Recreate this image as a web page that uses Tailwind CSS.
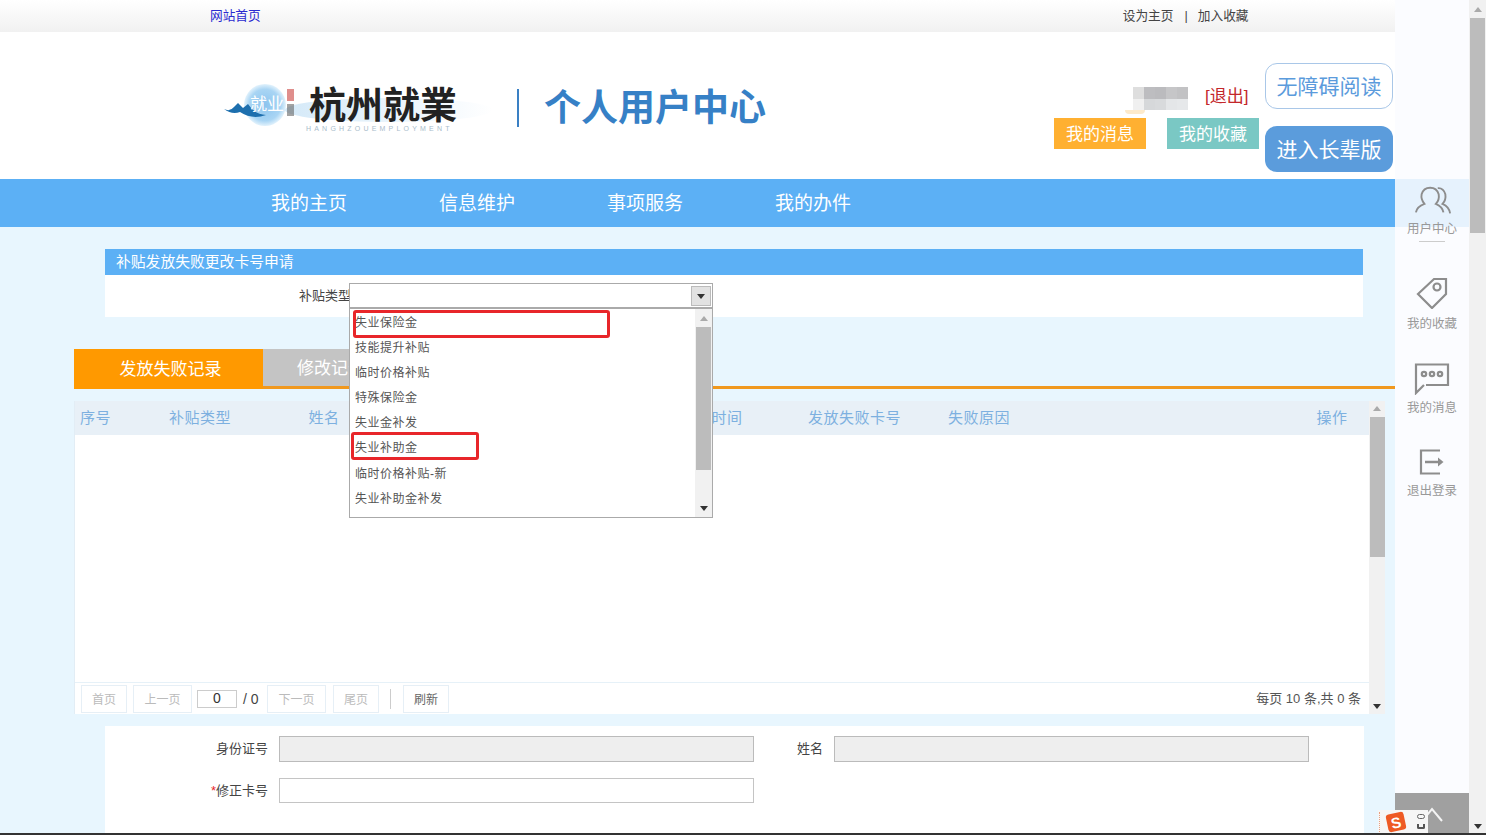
<!DOCTYPE html>
<html lang="zh-CN">
<head>
    <meta charset="UTF-8">
    <title>个人用户中心</title>
    <script src="https://cdn.jsdelivr.net/npm/@tailwindcss/browser@4"></script>
</head>
<body class="overflow-hidden">
<div class="relative flex h-[835px] w-[1486px] overflow-hidden bg-white text-[#444] [font-family:'Liberation_Sans','Noto_Sans_CJK_SC',sans-serif]">

    <!-- main column -->
    <div class="flex h-[835px] w-[1395px] flex-col overflow-hidden">
        <div class="flex h-[32px] shrink-0 items-center bg-gradient-to-b from-white to-[#f1f1f1] pt-[1px] text-[12.7px]">
            <a class="ml-[210px] text-[#2a2ad0]">网站首页</a>
            <a class="ml-[862px]">设为主页</a>
            <span class="ml-[11px]">|</span>
            <a class="ml-[10px]">加入收藏</a>
        </div>

        <div class="flex h-[147px] shrink-0 items-start bg-white">
            <!-- logo -->
            <div class="relative ml-[224px] mt-[48px] h-[60px] w-[270px]">
                <svg class="absolute left-0 top-0" width="270" height="60" viewBox="0 0 270 60">
                    <defs>
                        <radialGradient id="ball"><stop offset="0" stop-color="#8cc4ee"/><stop offset="0.75" stop-color="#a9d5f4"/><stop offset="1" stop-color="#e2f2fc"/></radialGradient>
                        <linearGradient id="wash"><stop offset="0" stop-color="#d4e9f8"/><stop offset="1" stop-color="#ffffff"/></linearGradient>
                    </defs>
                    <circle cx="41" cy="25" r="21" fill="url(#ball)"/>
                    <ellipse cx="165" cy="30" rx="104" ry="12" fill="url(#wash)"/>
                    <path d="M0 29 Q6 32 10 27 L14 23 L19 28 L24 24 Q30 34 42 35 Q28 40 16 32 Q8 35 0 29Z" fill="#1d6fae"/>
                    <rect x="63" y="9" width="7" height="12" fill="#c9423f" opacity="0.6"/>
                    <rect x="63" y="24" width="7" height="12" fill="#666" opacity="0.6"/>
                </svg>
                <span class="absolute left-[26px] top-[13px] text-[17px] leading-[24px] text-white">就业</span>
                <span class="absolute left-[85px] top-[0px] text-[37px] font-bold leading-[54px] text-[#222]">杭州就業</span>
                <span class="absolute left-[82px] top-[75px] mt-[-31px] text-[7px] leading-[10px] tracking-[3.2px] text-[#a9bccb]">HANGHZOUEMPLOYMENT</span>
            </div>
            <div class="ml-[23px] mt-[57px] h-[38px] w-[2px] bg-[#3a80c4]"></div>
            <h1 class="ml-[25px] mt-[51px] text-[37px] font-bold leading-[52px] text-[#3680c6]">个人用户中心</h1>

            <!-- user block -->
            <div class="ml-[288px] mt-[55px] flex w-[206px] flex-col">
                <div class="relative flex h-[31px] items-start">
                    <div class="ml-[79px] grid h-[23px] w-[55px] grid-cols-5 grid-rows-2">
                        <i class="bg-[#dedede]"></i><i class="bg-[#bdbdc0]"></i><i class="bg-[#bbbbbe]"></i><i class="bg-[#c6c6c8]"></i><i class="bg-[#c2c2c4]"></i>
                        <i class="bg-[#f0f0f0]"></i><i class="bg-[#d6d8da]"></i><i class="bg-[#d8dadc]"></i><i class="bg-[#e4e6e8]"></i><i class="bg-[#e6e8ea]"></i>
                    </div>
                    <div class="absolute left-[71px] top-[23px] h-[4px] w-[20px] rounded-b-full bg-[#fdeacb]"></div>
                    <span class="ml-[17px] text-[17px] leading-[20px] text-[#c3272b]">[退出]</span>
                </div>
                <div class="flex gap-[21px] text-[17px] text-white">
                    <a class="flex h-[31px] w-[92px] items-center justify-center bg-[#ffb031] pt-[2px]">我的消息</a>
                    <a class="flex h-[31px] w-[92px] items-center justify-center bg-[#7ac8c4] pt-[2px]">我的收藏</a>
                </div>
            </div>
            <div class="ml-[5px] mt-[31px] flex w-[128px] flex-col gap-[17px] text-[21px]">
                <a class="flex h-[46px] items-center justify-center rounded-[12px] border border-[#a9c7e8] bg-white pt-[1px] text-[#5b9bdc]">无障碍阅读</a>
                <a class="flex h-[46px] items-center justify-center rounded-[12px] bg-[#5b9cdc] pt-[2px] text-white">进入长辈版</a>
            </div>
        </div>

        <nav class="flex h-[48px] shrink-0 items-center bg-[#5cb0f5] pl-[271px] pt-[2px] text-[19px] text-white">
            <a class="w-[168px]">我的主页</a>
            <a class="w-[168px]">信息维护</a>
            <a class="w-[168px]">事项服务</a>
            <a class="w-[168px]">我的办件</a>
        </nav>

        <div class="flex-1 bg-[#e8f6fe] pt-[22px]">
            <div class="ml-[105px] flex h-[26px] w-[1258px] items-center bg-[#5cb0f5] pl-[11px] pt-[1px] text-[14.8px] text-white">补贴发放失败更改卡号申请</div>

            <!-- subsidy type select -->
            <div class="relative z-10 ml-[105px] flex h-[42px] w-[1258px] items-start bg-white pt-[8px]">
                <label class="ml-[194px] text-[13px] leading-[25px]">补贴类型</label>
                <div class="relative -ml-[2px] h-[25px] w-[364px] border border-[#aaa] bg-white">
                    <div class="absolute right-[1px] top-[2px] flex h-[20px] w-[20px] items-center justify-center border border-[#bbb] bg-[#e2e2e2]">
                        <div class="h-0 w-0 border-x-[4px] border-t-[5px] border-x-transparent border-t-[#333]"></div>
                    </div>
                    <!-- open list -->
                    <div class="absolute left-[-1px] top-[24px] flex h-[210px] w-[364px] border border-[#aaa] bg-white">
                        <ul class="flex-1 pl-[5px] pt-[2px] text-[12px] leading-[25.1px] tracking-[0.5px] text-[#555]">
                            <li>失业保险金</li>
                            <li>技能提升补贴</li>
                            <li>临时价格补贴</li>
                            <li>特殊保险金</li>
                            <li>失业金补发</li>
                            <li>失业补助金</li>
                            <li>临时价格补贴-新</li>
                            <li>失业补助金补发</li>
                        </ul>
                        <div class="flex w-[17px] flex-col items-center bg-[#f1f1f1]">
                            <div class="mt-[7px] h-0 w-0 border-x-[4px] border-b-[5px] border-x-transparent border-b-[#aaa]"></div>
                            <div class="mt-[6px] h-[143px] w-[15px] bg-[#bcbcbc]"></div>
                            <div class="mt-auto mb-[6px] h-0 w-0 border-x-[4px] border-t-[5px] border-x-transparent border-t-[#333]"></div>
                        </div>
                        <div class="absolute left-[3px] top-[1px] h-[28px] w-[257px] rounded-[3px] border-[3px] border-[#e8262a]"></div>
                        <div class="absolute left-[1px] top-[123px] h-[28px] w-[128px] rounded-[3px] border-[3px] border-[#e8262a]"></div>
                    </div>
                </div>
            </div>

            <!-- tabs -->
            <div class="ml-[74px] mt-[32px] flex h-[40px] border-b-[3px] border-[#f0981e] text-[17px] text-white">
                <div class="flex h-[40px] w-[189px] items-center justify-center bg-[#ff9900] pl-[4px] pt-[1px]">发放失败记录</div>
                <div class="flex h-[37px] w-[86px] items-center overflow-hidden whitespace-nowrap bg-[#c4c4c4] pl-[34px] pt-[2px]">修改记录</div>
            </div>

            <!-- grid -->
            <div class="ml-[74px] mt-[12px] flex h-[313px] w-[1311px]">
                <div class="flex w-[1295px] flex-col border-l border-[#e2edf5] bg-white">
                    <div class="flex h-[34px] shrink-0 items-center bg-[#e8f0f7] text-[15px] tracking-[0.5px] text-[#7db0e0]">
                        <span class="w-[75px] pl-[5px]">序号</span>
                        <span class="w-[100px] text-center">补贴类型</span>
                        <span class="w-[148px] text-center">姓名</span>
                        <span class="w-[292px]"></span>
                        <span class="w-[74px] text-center">时间</span>
                        <span class="w-[181px] text-center">发放失败卡号</span>
                        <span class="w-[351px] pl-[3px]">失败原因</span>
                        <span class="w-[72px] text-center">操作</span>
                    </div>
                    <div class="flex-1"></div>
                    <div class="flex h-[32px] shrink-0 items-center border-t border-[#e6f1f8] pl-[6px] pr-[8px] text-[12px]">
                        <a class="flex h-[28px] w-[46px] items-center justify-center border border-[#e6eff6] pt-[2px] text-[#bbb]">首页</a>
                        <a class="ml-[6px] flex h-[28px] w-[59px] items-center justify-center border border-[#e6eff6] pt-[2px] text-[#bbb]">上一页</a>
                        <input class="ml-[5px] h-[18px] w-[40px] border border-[#ccc] text-center text-[14px] text-[#333]" value="0">
                        <span class="ml-[6px] w-[24px] pt-[2px] text-[14px] text-[#444]">/ 0</span>
                        <a class="flex h-[28px] w-[59px] items-center justify-center border border-[#e6eff6] pt-[2px] text-[#bbb]">下一页</a>
                        <a class="ml-[7px] flex h-[28px] w-[46px] items-center justify-center border border-[#e6eff6] pt-[2px] text-[#bbb]">尾页</a>
                        <span class="ml-[11px] h-[20px] w-px bg-[#ccc]"></span>
                        <a class="ml-[12px] flex h-[28px] w-[46px] items-center justify-center border border-[#e6eff6] pt-[2px] text-[#666]">刷新</a>
                        <span class="ml-auto text-[13px] text-[#555]">每页 10 条,共 0 条</span>
                    </div>
                </div>
                <div class="flex w-[16px] flex-col items-center bg-[#f1f1f1]">
                    <div class="mt-[5px] h-0 w-0 border-x-[4px] border-b-[5px] border-x-transparent border-b-[#aaa]"></div>
                    <div class="mt-[6px] h-[140px] w-[15px] bg-[#bcbcbc]"></div>
                    <div class="mt-auto mb-[5px] h-0 w-0 border-x-[4px] border-t-[5px] border-x-transparent border-t-[#333]"></div>
                </div>
            </div>

            <!-- form -->
            <div class="ml-[105px] mt-[12px] h-[120px] w-[1259px] bg-white pt-[10px] text-[13px]">
                <div class="flex h-[26px] items-center">
                    <label class="w-[163px] text-right">身份证号</label>
                    <input disabled class="ml-[11px] h-[26px] w-[475px] border border-[#bbb] bg-[#eeeeee]">
                    <label class="ml-[43px] w-[26px]">姓名</label>
                    <input disabled class="ml-[11px] h-[26px] w-[475px] border border-[#bbb] bg-[#eeeeee]">
                </div>
                <div class="mt-[16px] flex h-[25px] items-center">
                    <label class="w-[163px] text-right"><span class="text-[#e8262a]">*</span>修正卡号</label>
                    <input class="ml-[11px] h-[25px] w-[475px] border border-[#c4c4c4] bg-white">
                </div>
            </div>
        </div>
    </div>

    <!-- right sidebar -->
    <aside class="flex h-[835px] w-[74px] flex-col items-center bg-[#fbfcff] text-[12.5px] text-[#999]">
        <div class="mt-[179px] flex h-[64px] w-full flex-col items-center bg-[linear-gradient(#e6f2fd_48px,#fbfcff_48px)] pl-[2px] pt-[7px]">
            <svg width="38" height="30" viewBox="0 0 40 30" fill="none" stroke="#8d8d8d" stroke-width="2">
                <path d="M2 27 Q3 21 11 18 Q7 13 8 8 Q10 1 17 1 Q24 1 26 8 Q27 14 23 18 Q30 21 31 27"/>
                <path d="M25 1.500 Q31 1 33 8 Q34 14 30 18 Q37 21 38 28"/>
            </svg>
            <span class="-ml-[2px] mt-[3px] leading-[20px]">用户中心</span>
            <span class="-ml-[2px] mt-[2px] h-px w-[26px] bg-[#ccc]"></span>
        </div>
        <div class="mt-[34px] flex flex-col items-center">
            <svg width="32" height="32" viewBox="0 0 32 32" fill="none" stroke="#8d8d8d" stroke-width="2.200">
                <path d="M2 17 L18 2 H30 V17 L16 31 Z"/>
                <circle cx="21" cy="10" r="3.500"/>
            </svg>
            <span class="mt-[5px] leading-[20px]">我的收藏</span>
        </div>
        <div class="mt-[29px] flex flex-col items-center">
            <svg width="36" height="32" viewBox="0 0 36 32" fill="none" stroke="#8d8d8d" stroke-width="2.200">
                <path d="M12 22 H34 V1.500 H2 V30 L10 22"/>
                <circle cx="10" cy="11" r="2.200"/><circle cx="18" cy="11" r="2.200"/><circle cx="26" cy="11" r="2.200"/>
            </svg>
            <span class="mt-[3px] leading-[20px]">我的消息</span>
        </div>
        <div class="mt-[31px] flex flex-col items-center">
            <svg width="26" height="26" viewBox="0 0 26 26" fill="none" stroke="#8d8d8d" stroke-width="2.200">
                <path d="M21 1.500 H2 V24.500 H21"/>
                <path d="M6 13 H21" stroke-width="2.500"/>
                <path d="M19 8.500 L24.500 13 L19 17.500 Z" fill="#8d8d8d" stroke="none"/>
            </svg>
            <span class="mt-[6px] leading-[20px]">退出登录</span>
        </div>
        <div class="mt-auto flex h-[42px] w-full justify-center bg-[#a0a0a0] pt-[14px]">
            <svg width="22" height="15" viewBox="0 0 22 15" fill="none" stroke="#f4f4f4" stroke-width="2"><path d="M1 14 L11 2 L21 14"/></svg>
        </div>
    </aside>

    <!-- window scrollbar -->
    <div class="flex h-[835px] w-[17px] flex-col items-center bg-[#f1f1f1]">
        <div class="mt-[7px] h-0 w-0 border-x-[4px] border-b-[5px] border-x-transparent border-b-[#aaa]"></div>
        <div class="mt-[6px] h-[215px] w-[15px] bg-[#bcbcbc]"></div>
        <div class="mt-auto mb-[6px] h-0 w-0 border-x-[4px] border-t-[5px] border-x-transparent border-t-[#333]"></div>
    </div>

    <!-- input method toolbar sits over the page -->
    <div class="absolute left-[1378px] top-[810px] flex h-[23px] w-[50px] items-center bg-[#f6f6f6]">
        <div class="ml-[1px] h-[20px] border-l border-dotted border-[#e8a080]"></div>
        <div class="ml-[7px] flex h-[18px] w-[18px] -rotate-12 items-center justify-center rounded-[3px] bg-[#ee5a24] text-[15px] font-bold leading-none text-white">S</div>
        <div class="ml-[12px] flex flex-col items-center gap-[5px]">
            <span class="h-[5px] w-[8px] rounded-full border border-[#666]"></span>
            <span class="h-[5px] w-[8px] rounded-b-[2px] border-x-2 border-b-2 border-[#555]"></span>
        </div>
    </div>

    <!-- bottom edge of the capture -->
    <div class="absolute bottom-0 left-0 h-[2px] w-full bg-[#333]"></div>
</div>
</body>
</html>
